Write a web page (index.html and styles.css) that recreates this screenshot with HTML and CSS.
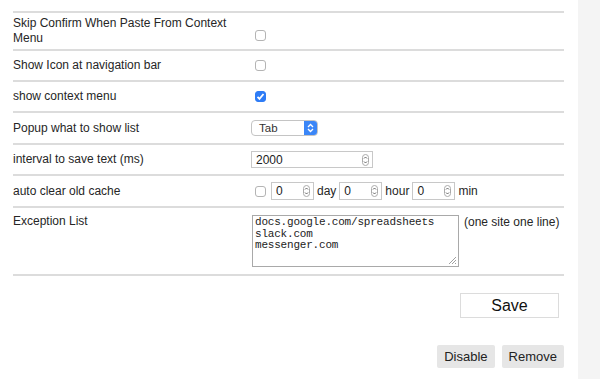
FILE: index.html
```html
<!DOCTYPE html>
<html lang="en">
<head>
  <meta charset="UTF-8">
  <title>Options</title>
  <link rel="stylesheet" href="styles.css">
</head>
<body>
  <div class="page">
    <main class="options">
      <div class="row row-tall">
        <div class="label">Skip Confirm When Paste From Context Menu</div>
        <div class="control control-low"><input type="checkbox" class="check"></div>
      </div>
      <div class="row">
        <div class="label">Show Icon at navigation bar</div>
        <div class="control"><input type="checkbox" class="check"></div>
      </div>
      <div class="row">
        <div class="label">show context menu</div>
        <div class="control"><input type="checkbox" class="check" checked></div>
      </div>
      <div class="row row-select">
        <div class="label">Popup what to show list</div>
        <div class="control">
          <div class="select">
            <span class="select-value">Tab</span>
            <span class="select-arrows">
              <svg width="7" height="10" viewBox="0 0 7 10"><path d="M1 4 3.5 1.5 6 4M1 6 3.5 8.5 6 6" fill="none" stroke="#fff" stroke-width="1.3"/></svg>
            </span>
          </div>
        </div>
      </div>
      <div class="row">
        <div class="label">interval to save text (ms)</div>
        <div class="control">
          <div class="number number-wide">
            <input type="text" value="2000">
            <span class="spin"><svg width="7" height="12" viewBox="0 0 7 12"><rect x="0.5" y="0.5" width="6" height="11" rx="3" fill="none" stroke="#aaa"/><path d="M2 4.5 3.5 3 5 4.5M2 7.5 3.5 9 5 7.5" fill="none" stroke="#555" stroke-width="0.9"/></svg></span>
          </div>
        </div>
      </div>
      <div class="row row-select">
        <div class="label">auto clear old cache</div>
        <div class="control control-inline">
          <input type="checkbox" class="check">
          <div class="number">
            <input type="text" value="0">
            <span class="spin"><svg width="7" height="12" viewBox="0 0 7 12"><rect x="0.5" y="0.5" width="6" height="11" rx="3" fill="none" stroke="#aaa"/><path d="M2 4.5 3.5 3 5 4.5M2 7.5 3.5 9 5 7.5" fill="none" stroke="#555" stroke-width="0.9"/></svg></span>
          </div>
          <span class="unit">day</span>
          <div class="number">
            <input type="text" value="0">
            <span class="spin"><svg width="7" height="12" viewBox="0 0 7 12"><rect x="0.5" y="0.5" width="6" height="11" rx="3" fill="none" stroke="#aaa"/><path d="M2 4.5 3.5 3 5 4.5M2 7.5 3.5 9 5 7.5" fill="none" stroke="#555" stroke-width="0.9"/></svg></span>
          </div>
          <span class="unit">hour</span>
          <div class="number">
            <input type="text" value="0">
            <span class="spin"><svg width="7" height="12" viewBox="0 0 7 12"><rect x="0.5" y="0.5" width="6" height="11" rx="3" fill="none" stroke="#aaa"/><path d="M2 4.5 3.5 3 5 4.5M2 7.5 3.5 9 5 7.5" fill="none" stroke="#555" stroke-width="0.9"/></svg></span>
          </div>
          <span class="unit">min</span>
        </div>
      </div>
      <div class="row row-area">
        <div class="label">Exception List</div>
        <div class="control control-top">
          <div class="area">
            <textarea class="sites">docs.google.com/spreadsheets
slack.com
messenger.com</textarea>
            <span class="grip"><svg width="9" height="9" viewBox="0 0 9 9"><path d="M8 1 1 8M8 4 4 8M8 7 7 8" stroke="#888" stroke-width="0.8"/></svg></span>
          </div>
          <span class="hint">(one site one line)</span>
        </div>
      </div>

      <div class="save-row">
        <button class="btn-save">Save</button>
      </div>
      <div class="actions">
        <button class="btn">Disable</button>
        <button class="btn">Remove</button>
      </div>
    </main>
    <aside class="gutter"></aside>
  </div>
</body>
</html>
```

FILE: styles.css
```css
html, body {
  margin: 0; padding: 0;
  background: #fff;
  font-family: "Liberation Sans", Arial, sans-serif;
  color: #262626;
  height: 100%; overflow: hidden;
}
.page {
  display: flex;
  height: 100%;
}
.options {
  width: 551px;
  padding: 11px 14px 0 13px;
  flex: none;
}
.gutter {
  flex: 1;
  background: #f4f4f4;
}
.row {
  display: flex;
  align-items: center;
  min-height: 29px;
  border-top: 2px solid #dcdcdc;
  font-size: 12px;
}
.row-tall { min-height: 36px; }
.row-select { min-height: 30px; }
.row-area {
  align-items: flex-start;
  min-height: 66px;
  border-bottom: 2px solid #dcdcdc;
}
.label {
  width: 238px;
  flex: none;
  line-height: 15px;
  padding: 3px 0;
}
.row-area .label { padding-top: 6px; }
.control {
  display: flex;
  align-items: center;
}
.control-low { margin-top: 8px; }
.control-inline { gap: 3px; }
.control-top {
  align-items: flex-start;
  padding-top: 7px;
}
.check {
  appearance: none;
  -webkit-appearance: none;
  width: 11px; height: 11px;
  margin: 0 0 0 4px;
  border: 1px solid #b4b4b4;
  border-radius: 3px;
  background: #fff;
  box-sizing: border-box;
}
.check:checked {
  border-color: #2e7cf6;
  background: #2e7cf6 url("data:image/svg+xml;utf8,<svg xmlns='http://www.w3.org/2000/svg' viewBox='0 0 11 11'><path d='M2.5 5.8 4.5 7.8 8.5 3' fill='none' stroke='white' stroke-width='1.8'/></svg>") center / 11px 11px no-repeat;
}
.control-inline .check { margin-right: 2px; }
.select {
  display: flex;
  width: 67px; height: 16px;
  border: 1px solid #c4c4c4;
  border-radius: 4px;
  box-sizing: border-box;
  overflow: hidden;
  font-size: 11.5px;
}
.select-value {
  flex: 1;
  padding-left: 7px;
  line-height: 14px;
  color: #333;
}
.select-arrows {
  width: 13px;
  background: #3b86f7;
  display: flex;
  align-items: center;
  justify-content: center;
}
.number {
  position: relative;
  width: 43px; height: 18px;
}
.number-wide {
  width: 122px; height: 17px;
}
.number input {
  width: 100%; height: 100%;
  box-sizing: border-box;
  border: 1px solid #c8c8c8;
  margin: 0;
  padding: 0 0 0 4px;
  font-family: inherit;
  font-size: 12px;
  color: #222;
  outline: none;
}
.spin {
  position: absolute;
  right: 4px; top: 50%;
  height: 12px;
  margin-top: -6px;
  line-height: 0;
}
.area {
  position: relative;
  line-height: 0;
}
.sites {
  width: 207px; height: 52px;
  box-sizing: border-box;
  border: 1px solid #a9a9a9;
  margin: 0 0 0 1px;
  padding: 1px 2px;
  font-family: "Liberation Mono", "Courier New", monospace;
  font-size: 11px;
  letter-spacing: -0.2px;
  line-height: 11.7px;
  color: #222;
  resize: none;
  overflow: hidden;
  outline: none;
}
.grip {
  position: absolute;
  right: 2px; bottom: 2px;
}
.hint {
  margin-left: 5px;
  line-height: 15px;
  white-space: nowrap;
}
.save-row {
  display: flex;
  justify-content: flex-end;
  padding-right: 5px;
  margin-top: 17px;
}
.btn-save {
  width: 99px; height: 25px;
  background: #fff;
  border: 1px solid #dcdcdc;
  font-family: inherit;
  font-size: 16px;
  color: #111;
  padding: 0;
}
.actions {
  display: flex;
  justify-content: flex-end;
  gap: 7px;
  margin-top: 27px;
}
.btn {
  height: 23px;
  padding: 0 7px;
  background: #e6e6e6;
  border: none;
  border-radius: 2px;
  font-family: inherit;
  font-size: 13px;
  color: #222;
}
```
